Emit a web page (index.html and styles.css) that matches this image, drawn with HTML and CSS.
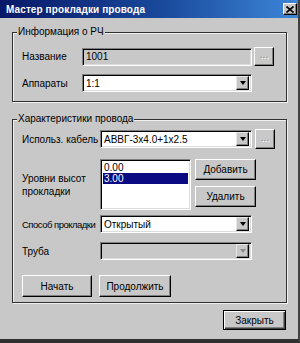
FILE: index.html
```html
<!DOCTYPE html>
<html lang="ru">
<head>
  <meta charset="UTF-8" />
  <title>Мастер прокладки провода</title>
  <link rel="stylesheet" href="styles.css">
</head>
<body>
<div class="window">
  <div class="titlebar">
    <span class="title">Мастер прокладки провода</span>
    <span class="close-btn">
      <svg width="8" height="7" viewBox="0 0 8 7"><path d="M0.5 0.5 L7.5 6.5 M7.5 0.5 L0.5 6.5" stroke="#000" stroke-width="1.6" fill="none"/></svg>
    </span>
  </div>

  <div class="content">
    <div class="group group-info">
      <span class="legend">Информация о РЧ</span>
      <div class="row">
        <span class="label label-short">Название</span>
        <span class="field field-info disabled">1001</span>
        <span class="btn btn-dots">...</span>
      </div>
      <div class="row row-gap">
        <span class="label label-short">Аппараты</span>
        <span class="combo field-info"><span class="combo-text">1:1</span><span class="arrow"><i></i></span></span>
      </div>
    </div>

    <div class="group group-wire">
      <span class="legend">Характеристики провода</span>
      <div class="row row-cable">
        <span class="label">Использ. кабель</span>
        <span class="combo field-wire"><span class="combo-text">АВВГ-3х4.0+1х2.5</span><span class="arrow"><i></i></span></span>
        <span class="btn btn-dots btn-dots-wire">...</span>
      </div>
      <div class="row row-levels">
        <span class="label label-levels">Уровни высот<br>прокладки</span>
        <div class="listbox">
          <div class="list-item">0.00</div>
          <div class="list-item selected">3.00</div>
        </div>
        <div class="level-buttons">
          <span class="btn btn-level">Добавить</span>
          <span class="btn btn-level">Удалить</span>
        </div>
      </div>
      <div class="row row-method">
        <span class="label label-tight">Способ прокладки</span>
        <span class="combo field-wire"><span class="combo-text">Открытый</span><span class="arrow"><i></i></span></span>
      </div>
      <div class="row row-pipe">
        <span class="label">Труба</span>
        <span class="combo field-wire disabled"><span class="combo-text"></span><span class="arrow"><i></i></span></span>
      </div>
      <div class="row row-actions">
        <span class="btn btn-start">Начать</span>
        <span class="btn btn-continue">Продолжить</span>
      </div>
    </div>

    <div class="footer">
      <span class="btn btn-close">Закрыть</span>
    </div>
  </div>
</div>
</body>
</html>
```

FILE: styles.css
```css
body {
      margin: 0;
      font-family: "Liberation Sans", Arial, sans-serif;
      font-size: 10px;
      color: #000;
    }
.window {
      width: 300px;
      height: 343px;
      box-sizing: border-box;
      background: #c8c8c8;
      border-right: 2px solid #404040;
      border-bottom: 4px solid #303030;
      display: flex;
      flex-direction: column;
    }
.titlebar {
      height: 18px;
      flex: none;
      display: flex;
      align-items: center;
      justify-content: space-between;
      padding: 0 1px 0 6px;
      background: linear-gradient(to right, #081868, #1a4a9c 55%, #3c86d8);
    }
.title {
      color: #fff;
      font-weight: bold;
      font-size: 10px;
      letter-spacing: 0.1px;
    }
.close-btn {
      width: 14px;
      height: 12px;
      box-sizing: border-box;
      display: flex;
      align-items: center;
      justify-content: center;
      background: #c8c8c8;
      border: 1px solid;
      border-color: #fff #000 #000 #fff;
      box-shadow: inset -1px -1px #808080;
    }
.content {
      padding: 14px 11px 0 12px;
    }
.group {
      position: relative;
      border: 1px solid #303030;
      box-shadow: 1px 1px 0 #f0f0f0, inset 1px 1px 0 #f0f0f0;
      padding: 14px 9px 9px 9px;
    }
.legend {
      position: absolute;
      top: -7px;
      left: 4px;
      line-height: 12px;
      padding: 0 1px;
      background: #c8c8c8;
    }
.group-wire {
      margin-top: 17px;
      padding-top: 9px;
      padding-bottom: 5px;
    }
.row {
      display: flex;
      align-items: center;
    }
.row-gap {
      margin-top: 8px;
    }
.label {
      width: 78px;
      flex: none;
      white-space: nowrap;
      overflow: hidden;
    }
.label-short {
      width: 60px;
    }
.label-tight {
      font-size: 9.5px;
      letter-spacing: -0.5px;
    }
.field, .combo {
      height: 18px;
      box-sizing: border-box;
      display: flex;
      align-items: center;
      background: #fff;
      border: 1px solid;
      border-color: #808080 #fff #fff #808080;
      box-shadow: inset 1px 1px #000, inset -1px -1px #dcdcdc;
      padding: 0 2px 0 3px;
    }
.field.disabled, .combo.disabled {
      background: #c8c8c8;
    }
.field-info {
      width: 170px;
    }
.field-wire {
      width: 152px;
    }
.combo-text {
      flex: 1;
    }
.arrow {
      width: 13px;
      height: 14px;
      box-sizing: border-box;
      display: flex;
      align-items: center;
      justify-content: center;
      background: #c8c8c8;
      border: 1px solid;
      border-color: #e8e8e8 #000 #000 #e8e8e8;
      box-shadow: inset -1px -1px #808080;
    }
.arrow i {
      border-left: 3px solid transparent;
      border-right: 3px solid transparent;
      border-top: 4px solid #000;
    }
.combo.disabled .arrow i {
      border-top-color: #8c8c8c;
    }
.btn {
      box-sizing: border-box;
      display: flex;
      align-items: center;
      justify-content: center;
      background: #c8c8c8;
      border: 1px solid;
      border-color: #fff #000 #000 #fff;
      box-shadow: inset -1px -1px #808080;
      white-space: nowrap;
    }
.btn-dots {
      width: 20px;
      height: 19px;
      margin-left: 2px;
      color: #8c8c8c;
      text-shadow: 1px 1px #fff;
      padding-bottom: 4px;
    }
.btn-dots-wire {
      margin-left: 3px;
      height: 20px;
    }
.row-cable {
      height: 20px;
    }
.row-levels {
      margin-top: 10px;
      align-items: center;
    }
.label-levels {
      line-height: 13px;
      white-space: normal;
    }
.listbox {
      width: 91px;
      height: 51px;
      box-sizing: border-box;
      background: #fff;
      border: 1px solid;
      border-color: #808080 #fff #fff #808080;
      box-shadow: inset 1px 1px #000, inset -1px -1px #dcdcdc;
      padding: 2px 2px 0 2px;
      align-self: flex-start;
    }
.list-item {
      line-height: 11px;
      padding-left: 1px;
    }
.list-item.selected {
      background: #0a0a82;
      color: #fff;
    }
.level-buttons {
      align-self: flex-start;
      display: flex;
      flex-direction: column;
      gap: 6px;
      margin-left: 4px;
    }
.btn-level {
      width: 61px;
      height: 21px;
    }
.row-method {
      margin-top: 5px;
    }
.row-pipe {
      margin-top: 9px;
    }
.row-actions {
      margin-top: 15px;
      gap: 7px;
    }
.btn-start {
      width: 70px;
      height: 22px;
    }
.btn-continue {
      width: 72px;
      height: 22px;
    }
.footer {
      display: flex;
      justify-content: flex-end;
      margin-top: 7px;
      padding-right: 1px;
    }
.btn-close {
      width: 63px;
      height: 20px;
      border: 1px solid #000;
      box-shadow: inset 1px 1px #fff, inset -1px -1px #404040, inset -2px -2px #808080;
    }
```
